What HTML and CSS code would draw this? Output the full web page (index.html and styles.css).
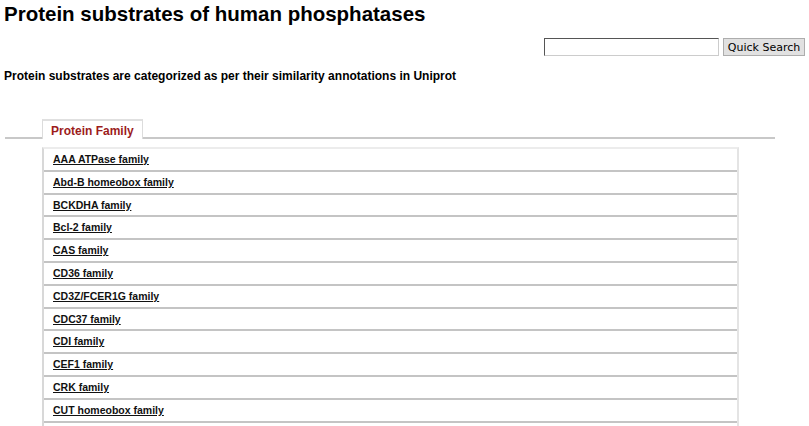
FILE: index.html
```html
<!DOCTYPE html>
<html>
<head>
<meta charset="utf-8">
<link rel="stylesheet" href="styles.css">
</head>
<body>
<h1 class="title">Protein substrates of human phosphatases</h1>
<div class="search">
  <input class="search-input" type="text">
  <button class="search-btn">Quick Search</button>
</div>
<p class="intro">Protein substrates are categorized as per their similarity annotations in Uniprot</p>
<div class="tabs">
  <div class="tab">Protein Family</div>
</div>
<ul class="list">
  <li class="row"><a href="#">AAA ATPase family</a></li>
  <li class="row"><a href="#">Abd-B homeobox family</a></li>
  <li class="row"><a href="#">BCKDHA family</a></li>
  <li class="row"><a href="#">Bcl-2 family</a></li>
  <li class="row"><a href="#">CAS family</a></li>
  <li class="row"><a href="#">CD36 family</a></li>
  <li class="row"><a href="#">CD3Z/FCER1G family</a></li>
  <li class="row"><a href="#">CDC37 family</a></li>
  <li class="row"><a href="#">CDI family</a></li>
  <li class="row"><a href="#">CEF1 family</a></li>
  <li class="row"><a href="#">CRK family</a></li>
  <li class="row"><a href="#">CUT homeobox family</a></li>
  <li class="row row-empty"></li>
</ul>
</body>
</html>
```
FILE: styles.css
```css
html, body {
  margin: 0;
  padding: 0;
  background: #fff;
  overflow: hidden;
}
body {
  font-family: "Liberation Sans", Arial, sans-serif;
  color: #000;
  padding: 0 4px;
  height: 426px;
}
.title {
  margin: 0;
  padding-top: 2px;
  font-size: 20.5px;
  font-weight: bold;
  line-height: 24px;
}
.search {
  display: flex;
  justify-content: flex-end;
  align-items: center;
  gap: 4px;
  margin-top: 12px;
}
.search-input {
  width: 169px;
  height: 14px;
  margin: 0;
  padding: 1px 2px;
  border: 1px solid #767676;
  border-top-color: #555;
  border-left-color: #555;
  border-right-color: #ccc;
  border-bottom-color: #ccc;
  background: #fff;
}
.search-btn {
  margin: 0;
  width: 82px;
  height: 18px;
  padding: 0;
  font-family: "DejaVu Sans", Tahoma, sans-serif;
  font-size: 11px;
  color: #000;
  background: #e1e1e1;
  border: 1px solid #adadad;
  line-height: 15px;
}
.intro {
  margin: 12px 0 0 0;
  font-size: 12px;
  font-weight: bold;
  line-height: 16px;
}
.tabs {
  box-sizing: border-box;
  margin-top: 35px;
  margin-left: 1px;
  width: 770px;
  border-bottom: 2px solid #c8c8c8;
  padding-left: 37px;
  display: flex;
}
.tab {
  margin-bottom: -2px;
  padding: 0 8px;
  height: 18px;
  line-height: 20px;
  font-size: 12px;
  font-weight: bold;
  color: #9c1c1c;
  background: #fff;
  border: 1px solid #dcdcdc;
  border-bottom: none;
  border-top: 2px solid #e0e0e0;
}
.list {
  list-style: none;
  margin: 8px 0 0 38px;
  padding: 0;
  width: 693px;
  border-left: 2px solid #d8d8d8;
  border-right: 2px solid #e4e4e4;
  border-top: 2px solid #ececec;
}
.row {
  height: 20.8px;
  line-height: 21px;
  padding-left: 9px;
  border-bottom: 2px solid #c4c4c4;
  font-size: 10.5px;
  font-weight: bold;
}
.row a {
  color: #111;
  text-decoration: underline;
}
```
